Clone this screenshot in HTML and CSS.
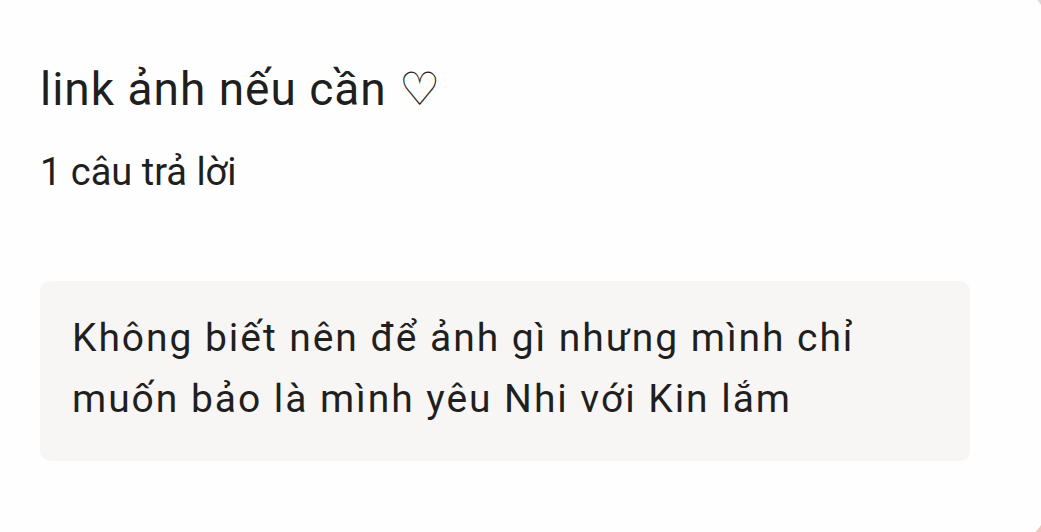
FILE: index.html
```html
<!DOCTYPE html>
<html lang="vi">
<head>
    <meta charset="UTF-8">
    <meta name="viewport" content="width=device-width, initial-scale=1.0">
    <title>link ảnh nếu cần</title>
    <link rel="stylesheet" href="styles.css">
</head>
<body>
    <div class="form-card">
        <div class="form-title">link ảnh nếu cần ♡</div>
        <div class="form-count">1 câu trả lời</div>
        <div class="answer-box">
            Không biết nên để ảnh gì nhưng mình chỉ muốn bảo là mình yêu Nhi với Kin lắm
        </div>
    </div>
</body>
</html>
```

FILE: styles.css
```css
:root {
    --card: #fefefe;
    --answer: #f8f6f5;
    --text: #1f1f1f;
}
html, body {
    margin: 0;
    padding: 0;
    height: 100%;
    overflow: hidden;
    font-family: Roboto, 'Noto Sans', Arial, sans-serif;
    background: linear-gradient(180deg, #dcd6d6 0%, #f0c6bc 100%);
    color: var(--text);
}
.form-card {
    background: var(--card);
    margin: -10px -4px 0 0;
    height: 550px;
    border-radius: 0 30px 30px 0;
    padding: 72px 75px 0 40px;
    box-sizing: border-box;
}
.form-title {
    font-size: 46px;
    line-height: 54px;
    letter-spacing: 1px;
}
.form-count {
    font-size: 38px;
    line-height: 44px;
    margin-top: 34px;
}
.answer-box {
    background: var(--answer);
    border-radius: 10px;
    margin-top: 87px;
    padding: 27px 32px 31px 32px;
    font-size: 39px;
    line-height: 61px;
    letter-spacing: 1.95px;
}
```
